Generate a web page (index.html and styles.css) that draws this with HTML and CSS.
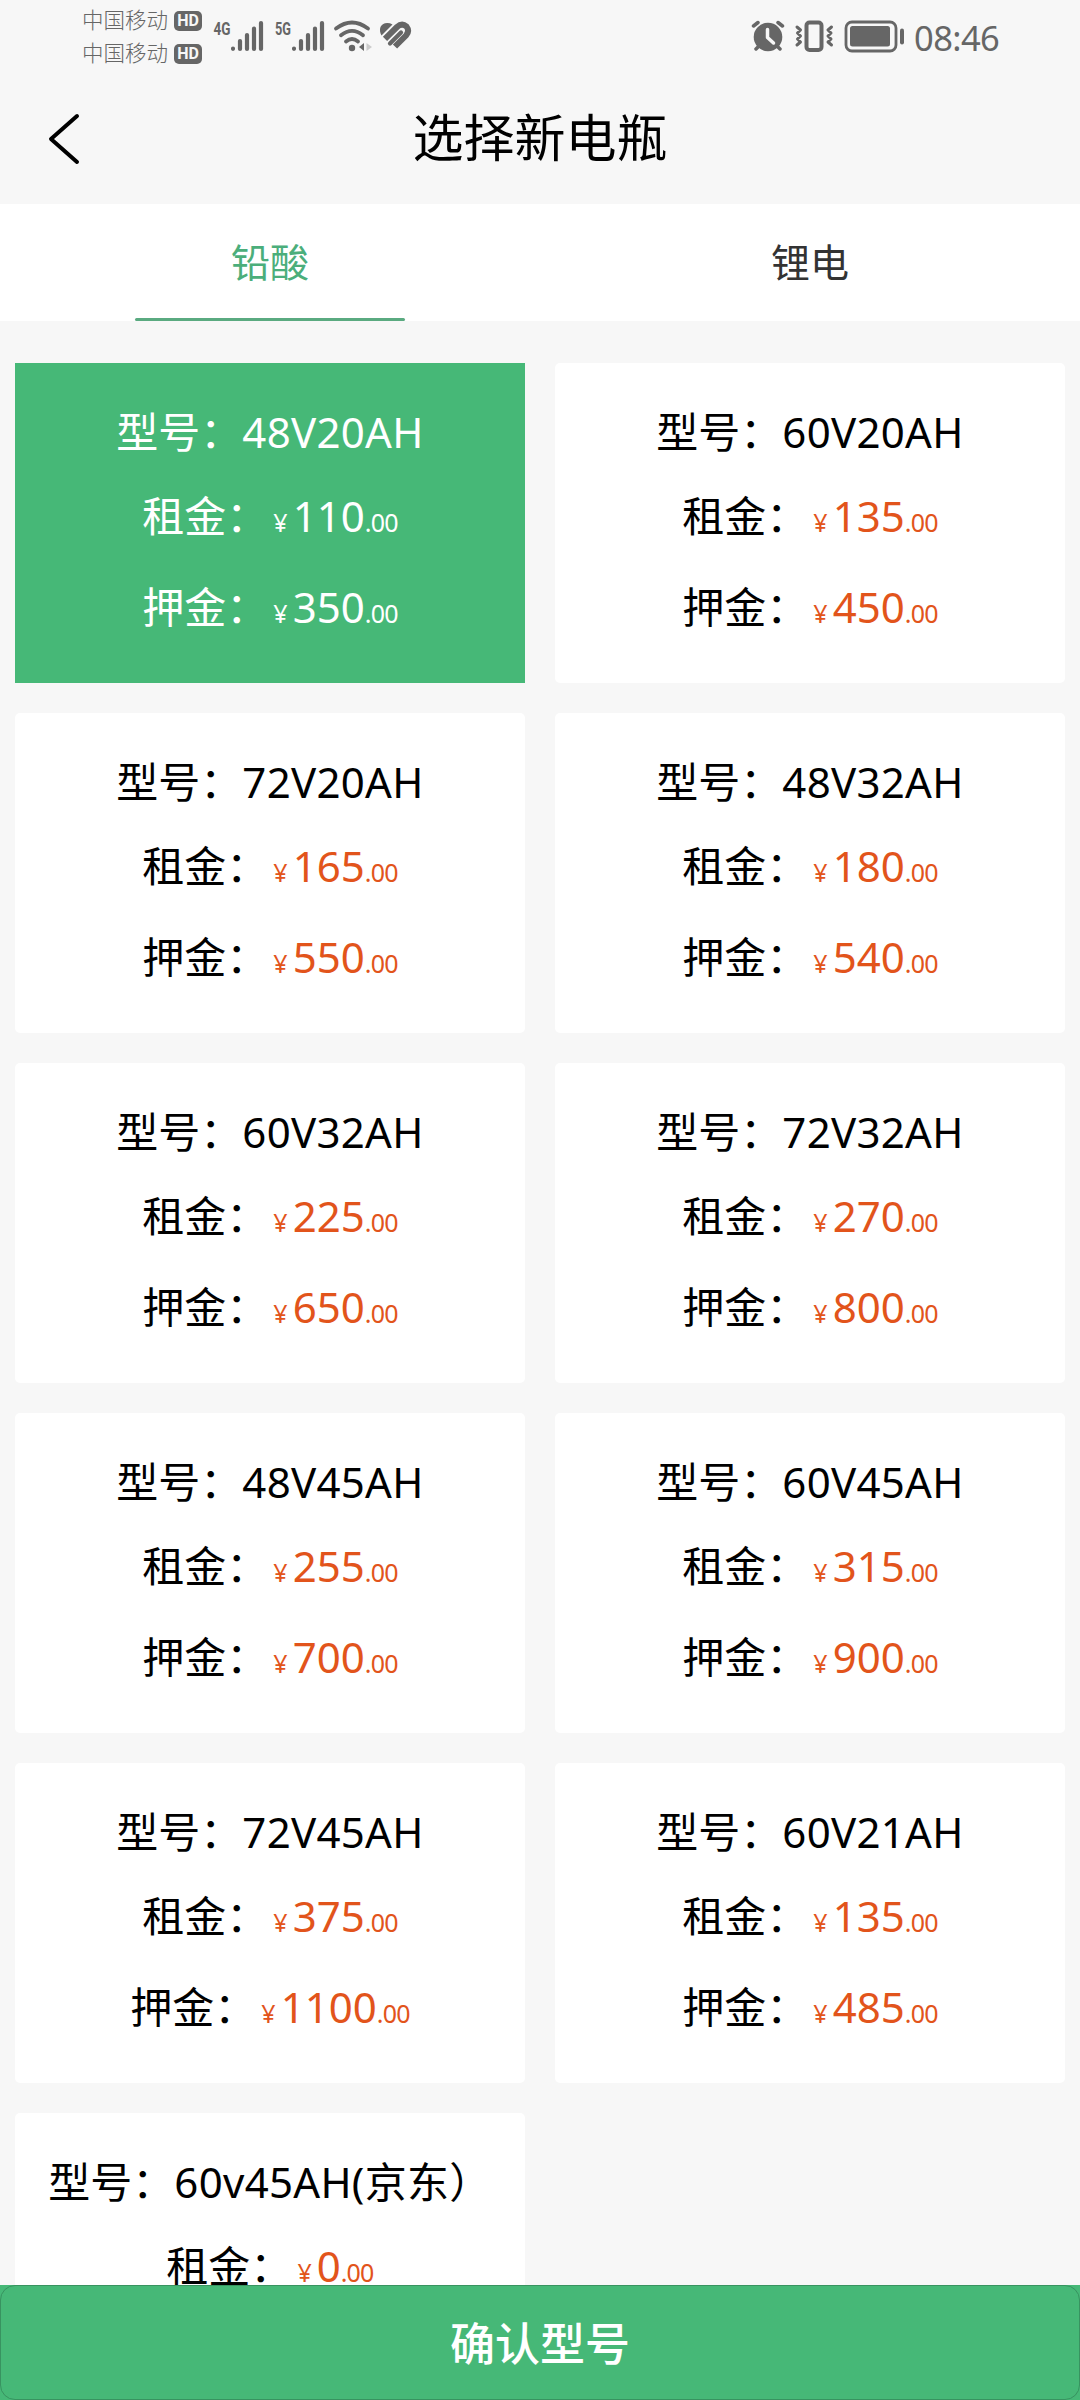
FILE: index.html
```html
<!DOCTYPE html>
<html lang="zh-CN">
<head>
<meta charset="UTF-8" />
<title>选择新电瓶</title>
<link rel="stylesheet" href="styles.css">
</head>
<body>
<div class="page">
  <!-- Status bar -->
  <div class="status-bar">
    <div class="carriers">
      <div class="carrier">中国移动<span class="hd">HD</span></div>
      <div class="carrier">中国移动<span class="hd">HD</span></div>
    </div>
    <svg class="icon" width="61" height="70" viewBox="210 0 61 70">
      <text x="213.500" y="34.500" class="net" textLength="17" lengthAdjust="spacingAndGlyphs">4G</text>
      <path class="bars" d="M233 48.800V48.700M240 49V41M247 49V35M254 49V28.500M261 49V23" />
    </svg>
    <svg class="icon" width="61" height="70" viewBox="271 0 61 70">
      <text x="275" y="34.500" class="net" textLength="16" lengthAdjust="spacingAndGlyphs">5G</text>
      <path class="bars" d="M294 48.800V48.700M301 49V41M308 49V35M315 49V28.500M322 49V23" />
    </svg>
    <svg class="icon" width="44" height="70" viewBox="332 0 44 70">
      <path class="wave" d="M336 28.500Q352 16.500 368 28.500M341 35.200Q352 26.500 363 35.200M346 41.500Q352 36.500 358 41.500" />
      <circle cx="352" cy="48" r="3.200" fill="#666" />
      <path d="M359 47L364 43V51Z" fill="#666" />
      <path d="M366.500 43L372 47L366.500 51Z" fill="#ccc" />
    </svg>
    <svg class="icon" width="40" height="70" viewBox="376 0 40 70">
      <path d="M381.500 35.500C378.500 30 380 24.500 385 23.300Q389 22.500 392.500 24.500Z" fill="#666" />
      <path d="M385 38.800L397 27Q402 22.500 406.500 26.500Q410 31 406 35.500L395 46.500" fill="none" stroke="#666" stroke-width="6" />
      <path d="M390 43.500L401 32.500" stroke="#666" stroke-width="4.200" stroke-linecap="round" />
    </svg>
    <div class="spacer"></div>
    <svg class="icon" width="42" height="70" viewBox="748 0 42 70">
      <circle cx="767" cy="37" r="14.300" fill="#666" />
      <path d="M752.500 26L757 22.500M781.500 26L777 22.500M758 46L755 49M776 46L779 49" stroke="#666" stroke-width="3.500" stroke-linecap="round" />
      <path d="M766.500 29.500V37.500L772.500 43" fill="none" stroke="#f7f7f7" stroke-width="3.500" stroke-linecap="round" stroke-linejoin="round" />
    </svg>
    <svg class="icon" width="49" height="70" viewBox="790 0 49 70">
      <rect x="805.500" y="22.500" width="15" height="27.500" rx="3" fill="none" stroke="#666" stroke-width="4" />
      <path d="M796 27L799.500 30L796.500 33L799.500 36L796.500 39L799.500 42L796 45M830.500 27L827 30L830 33L827 36L830 39L827 42L830.500 45" fill="none" stroke="#666" stroke-width="3" stroke-linecap="round" stroke-linejoin="round" />
    </svg>
    <svg class="icon" width="74" height="70" viewBox="839 0 74 70">
      <rect x="845" y="22" width="50" height="29" rx="6" fill="none" stroke="#666" stroke-width="2.800" />
      <rect x="849" y="26" width="40" height="20.500" rx="2.500" fill="#666" />
      <path d="M901 30.500V42.500" stroke="#666" stroke-width="4" stroke-linecap="round" />
    </svg>
    <div class="time">08:46</div>
  </div>

  <!-- Header -->
  <div class="header">
    <svg class="back" width="34" height="56" viewBox="0 0 34 56">
      <path d="M30 5L4 28L30 51" />
    </svg>
    <h1>选择新电瓶</h1>
  </div>

  <!-- Tabs -->
  <div class="tabs">
    <div class="tab active">铅酸</div>
    <div class="tab">锂电</div>
  </div>

  <!-- Battery list -->
  <div class="list">
    <div class="card selected">
      <div class="model">型号：<span>48V20AH</span></div>
      <div class="price">租金：<span class="amount"><i>¥</i>110<small>.00</small></span></div>
      <div class="price">押金：<span class="amount"><i>¥</i>350<small>.00</small></span></div>
    </div>
    <div class="card">
      <div class="model">型号：<span>60V20AH</span></div>
      <div class="price">租金：<span class="amount"><i>¥</i>135<small>.00</small></span></div>
      <div class="price">押金：<span class="amount"><i>¥</i>450<small>.00</small></span></div>
    </div>
    <div class="card">
      <div class="model">型号：<span>72V20AH</span></div>
      <div class="price">租金：<span class="amount"><i>¥</i>165<small>.00</small></span></div>
      <div class="price">押金：<span class="amount"><i>¥</i>550<small>.00</small></span></div>
    </div>
    <div class="card">
      <div class="model">型号：<span>48V32AH</span></div>
      <div class="price">租金：<span class="amount"><i>¥</i>180<small>.00</small></span></div>
      <div class="price">押金：<span class="amount"><i>¥</i>540<small>.00</small></span></div>
    </div>
    <div class="card">
      <div class="model">型号：<span>60V32AH</span></div>
      <div class="price">租金：<span class="amount"><i>¥</i>225<small>.00</small></span></div>
      <div class="price">押金：<span class="amount"><i>¥</i>650<small>.00</small></span></div>
    </div>
    <div class="card">
      <div class="model">型号：<span>72V32AH</span></div>
      <div class="price">租金：<span class="amount"><i>¥</i>270<small>.00</small></span></div>
      <div class="price">押金：<span class="amount"><i>¥</i>800<small>.00</small></span></div>
    </div>
    <div class="card">
      <div class="model">型号：<span>48V45AH</span></div>
      <div class="price">租金：<span class="amount"><i>¥</i>255<small>.00</small></span></div>
      <div class="price">押金：<span class="amount"><i>¥</i>700<small>.00</small></span></div>
    </div>
    <div class="card">
      <div class="model">型号：<span>60V45AH</span></div>
      <div class="price">租金：<span class="amount"><i>¥</i>315<small>.00</small></span></div>
      <div class="price">押金：<span class="amount"><i>¥</i>900<small>.00</small></span></div>
    </div>
    <div class="card">
      <div class="model">型号：<span>72V45AH</span></div>
      <div class="price">租金：<span class="amount"><i>¥</i>375<small>.00</small></span></div>
      <div class="price">押金：<span class="amount"><i>¥</i>1100<small>.00</small></span></div>
    </div>
    <div class="card">
      <div class="model">型号：<span>60V21AH</span></div>
      <div class="price">租金：<span class="amount"><i>¥</i>135<small>.00</small></span></div>
      <div class="price">押金：<span class="amount"><i>¥</i>485<small>.00</small></span></div>
    </div>
    <div class="card">
      <div class="model">型号：<span>60v45AH(京东）</span></div>
      <div class="price">租金：<span class="amount"><i>¥</i>0<small>.00</small></span></div>
    </div>
  </div>

  <!-- Confirm -->
  <div class="footer">
    <button class="confirm">确认型号</button>
  </div>
</div>
</body>
</html>
```
FILE: styles.css
```css
* {
  box-sizing: border-box;
}
body {
  margin: 0;
  background: #f7f7f7;
  color: #000;
  font-family: "Noto Sans", "Noto Sans CJK SC", sans-serif;
}
.page {
  width: 1080px;
  height: 2400px;
  display: flex;
  flex-direction: column;
  overflow: hidden;
}
/* Status bar */
.status-bar {
  display: flex;
  flex: none;
  height: 70px;
  padding-left: 82px;
  color: #666;
}
.carriers {
  width: 128px;
  padding-top: 3px;
}
.carrier {
  display: flex;
  align-items: center;
  height: 33px;
  font-size: 21.5px;
  font-weight: 300;
  line-height: 33px;
  white-space: nowrap;
}
.hd {
  width: 28px;
  height: 20px;
  margin-top: 2px;
  margin-left: 6px;
  border-radius: 5px;
  background: #666;
  color: #f7f7f7;
  font: bold 16px/20px Roboto, sans-serif;
  text-align: center;
}
.icon {
  flex: none;
}
.net {
  fill: #666;
  font: bold 18px Roboto, sans-serif;
}
.bars {
  fill: none;
  stroke: #666;
  stroke-width: 4.2;
  stroke-linecap: round;
}
.wave {
  fill: none;
  stroke: #666;
  stroke-width: 3.8;
  stroke-linecap: round;
}
.spacer {
  flex: 1;
}
.time {
  width: 166px;
  font-size: 34.5px;
  font-weight: 400;
  line-height: 76px;
  letter-spacing: -0.6px;
}
/* Header */
.header {
  display: flex;
  flex: none;
  align-items: center;
  height: 134px;
  padding: 0 45px 0 47px;
}
.back {
  margin-top: 3px;
  fill: none;
  stroke: #000;
  stroke-width: 4;
  stroke-linecap: round;
  stroke-linejoin: round;
}
h1 {
  flex: 1;
  margin: 0 36px 0 0;
  font-size: 51px;
  font-weight: 400;
  line-height: 134px;
  text-align: center;
}
/* Tabs */
.tabs {
  display: flex;
  flex: none;
  height: 117px;
  background: #fff;
}
.tab {
  display: flex;
  flex: 1;
  flex-direction: column;
  align-items: center;
  padding-top: 2px;
  color: #333;
  font-size: 39px;
  line-height: 112px;
}
.tab.active {
  color: #4bae7b;
}
.tab.active::after {
  content: "";
  width: 270px;
  height: 3px;
  border-radius: 2px;
  background: #5aaa80;
}
/* Battery cards */
.list {
  display: grid;
  flex: 1;
  grid-template-columns: 510px 510px;
  grid-auto-rows: 320px;
  gap: 30px;
  min-height: 0;
  padding: 42px 15px 0;
  overflow: hidden;
}
.card {
  padding-top: 39px;
  border-radius: 5px;
  background: #fff;
  font-size: 42px;
  line-height: 60px;
  text-align: center;
  white-space: nowrap;
}
.model {
  height: 60px;
  margin-bottom: 24px;
}
.model span {
  letter-spacing: 0.3px;
}
.price {
  height: 60px;
  margin-bottom: 31px;
}
.amount {
  margin-left: 5px;
  color: #e2541b;
}
.amount i {
  margin-right: 5px;
  font-size: 25px;
  font-style: normal;
  line-height: 1;
}
.amount small {
  font-size: 25px;
  line-height: 1;
  letter-spacing: -0.8px;
}
.card.selected {
  border-radius: 0;
  background: #46b877;
  color: #fff;
}
.card.selected .amount {
  color: #fff;
}
/* Confirm button */
.footer {
  flex: none;
  height: 115px;
  background: #46b877;
}
.confirm {
  display: block;
  width: 100%;
  height: 115px;
  padding: 2px 0 0;
  border: 1px solid #389360;
  border-radius: 15px;
  background: #46b877;
  color: #fff;
  font-family: inherit;
  font-size: 45px;
  font-weight: 500;
  line-height: 111px;
}
```
